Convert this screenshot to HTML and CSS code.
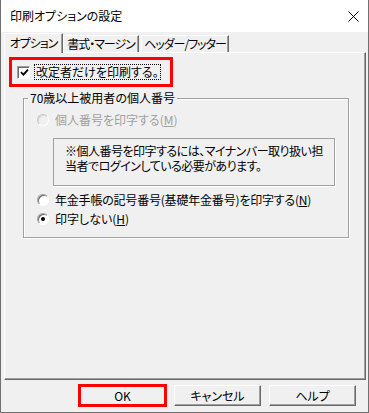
FILE: index.html
```html
<!DOCTYPE html>
<html lang="ja">
<head>
  <meta charset="UTF-8">
  <title>印刷オプションの設定</title>
  <link rel="stylesheet" href="styles.css">
</head>
<body>
  <div class="window">
    <div class="titlebar">
      <span class="title">印刷オプションの設定</span>
      <svg class="close" width="11" height="11" viewBox="0 0 11 11">
        <path d="M0.5 0.5L10.5 10.5M10.5 0.5L0.5 10.5" stroke="#000" stroke-width="1" fill="none"/>
      </svg>
    </div>

    <div class="tabs">
      <div class="tab tab-active">オプション</div>
      <div class="tab tab-format">書式・マージン</div>
      <div class="tab tab-header">ヘッダー/フッター</div>
    </div>

    <div class="panel">
      <div class="mark">
        <label class="check">
          <span class="checkbox">
            <svg width="9" height="9" viewBox="0 0 9 9">
              <path d="M1 4.2L3.4 6.6L8 1.6" stroke="#000" stroke-width="1.8" fill="none"/>
            </svg>
          </span>
          <span class="focus">改定者だけを印刷する。</span>
        </label>
      </div>

      <fieldset class="group">
        <legend>70歳以上被用者の個人番号</legend>
        <div class="radio-row disabled">
          <span class="radio"></span>
          <span>個人番号を印字する(<u>M</u>)</span>
        </div>
        <div class="note">
          ※個人番号を印字するには、マイナンバー取り扱い担<br>
          当者でログインしている必要があります。
        </div>
        <div class="radio-row row-second">
          <span class="radio"></span>
          <span class="long">年金手帳の記号番号(基礎年金番号)を印字する(<u>N</u>)</span>
        </div>
        <div class="radio-row row-third">
          <span class="radio checked"></span>
          <span>印字しない(<u>H</u>)</span>
        </div>
      </fieldset>
    </div>

    <div class="buttons">
      <button class="btn btn-ok">OK</button>
      <button class="btn">キャンセル</button>
      <button class="btn">ヘルプ</button>
    </div>
  </div>
</body>
</html>
```

FILE: styles.css
```css
* {
  box-sizing: border-box;
}
body {
  margin: 0;
  background: #fff;
  font-family: "Noto Sans CJK JP", sans-serif;
  font-size: 12px;
  line-height: 14px;
  color: #000;
  font-feature-settings: "palt";
}
.window {
  width: 369px;
  height: 413px;
  background: #f0f0f0;
  border: 1px solid #707070;
  border-top: none;
  display: flex;
  flex-direction: column;
}
.titlebar {
  height: 32px;
  flex: none;
  background: #fff;
  display: flex;
  align-items: center;
  justify-content: space-between;
  padding: 0 9px 0 9px;
}
.close {
  display: block;
}

/* tabs */
.tabs {
  height: 20px;
  flex: none;
  display: flex;
  align-items: flex-end;
  padding-left: 3px;
}
.tab {
  height: 17px;
  border-top: 1px solid #fff;
  border-left: 1px solid #fff;
  border-right: 1px solid #696969;
  box-shadow: inset -1px 0 0 #a0a0a0;
  text-align: center;
  line-height: 15px;
  letter-spacing: -1px;
  white-space: nowrap;
}
.tab-active {
  position: relative;
  z-index: 1;
  width: 59px;
  height: 20px;
  margin-bottom: -1px;
  background: #f0f0f0;
  line-height: 18px;
}
.tab-format {
  width: 76px;
}
.tab-header {
  width: 88px;
  margin-left: 2px;
}

/* panel */
.panel {
  height: 328px;
  flex: none;
  margin: 0 2px 0 3px;
  border-top: 1px solid #fff;
  border-left: 1px solid #fff;
  border-right: 1px solid #696969;
  border-bottom: 1px solid #696969;
  box-shadow: inset -1px -1px 0 #a0a0a0;
}
.mark {
  width: 164px;
  height: 30px;
  margin: 4px 0 0 4px;
  border: 3px solid #f00;
  display: flex;
  align-items: center;
  padding-left: 5px;
}
.check {
  display: flex;
  align-items: center;
}
.checkbox {
  width: 13px;
  height: 13px;
  background: #fff;
  border: 1px solid;
  border-color: #a0a0a0 #fff #fff #a0a0a0;
  box-shadow: inset 1px 1px 0 #696969;
  display: flex;
  align-items: center;
  justify-content: center;
  padding: 1px 0 0 1px;
}
.checkbox svg {
  display: block;
}
.focus {
  margin-left: 4px;
  padding: 0 1px;
  border: 1px dotted #000;
  white-space: nowrap;
}

/* group */
.group {
  width: 326px;
  margin: 4px 0 0 18px;
  padding: 0 0 10px 0;
  border: 1px solid #a0a0a0;
  box-shadow: inset 1px 1px 0 #fff, 1px 1px 0 #fff;
}
.group legend {
  margin-left: 4px;
  padding: 0 2px;
  background: #f0f0f0;
  white-space: nowrap;
}
.radio-row {
  height: 16px;
  display: flex;
  align-items: center;
  gap: 6px;
  padding-left: 13px;
  margin-top: 7px;
  white-space: nowrap;
}
.radio-row .long {
  letter-spacing: -0.2px;
}
.row-second {
  margin-top: 6px;
}
.row-third {
  margin-top: 3px;
}
.radio {
  width: 12px;
  height: 12px;
  flex: none;
  border-radius: 50%;
  background: #fff;
  border: 1px solid;
  border-color: #a0a0a0 #fff #fff #a0a0a0;
  box-shadow: inset 1px 1px 0 #696969;
  display: flex;
  align-items: center;
  justify-content: center;
}
.radio.checked::after {
  content: "";
  width: 4px;
  height: 4px;
  border-radius: 50%;
  background: #000;
}
.disabled {
  color: #a0a0a0;
}
.disabled .radio {
  background: #f0f0f0;
  border-color: #c8c8c8 #fff #fff #c8c8c8;
  box-shadow: inset 1px 1px 0 #dadada;
}
.note {
  width: 282px;
  height: 48px;
  margin: 10px 0 0 29px;
  padding: 4px 0 0 11px;
  border: 1px solid #a0a0a0;
  box-shadow: 1px 1px 0 #fff;
  line-height: 15px;
  letter-spacing: -0.5px;
  white-space: nowrap;
}

/* buttons */
.buttons {
  display: flex;
  justify-content: flex-end;
  gap: 8px;
  padding: 5px 12px 0 0;
}
.btn {
  width: 87px;
  height: 21px;
  padding: 0;
  background: #f0f0f0;
  border: 1px solid;
  border-color: #fff #696969 #696969 #fff;
  box-shadow: inset -1px -1px 0 #a0a0a0;
  font-family: inherit;
  font-size: 12px;
  font-feature-settings: "palt";
  color: #000;
}
.btn-ok {
  outline: 3px solid #f00;
  outline-offset: -2px;
}
```
